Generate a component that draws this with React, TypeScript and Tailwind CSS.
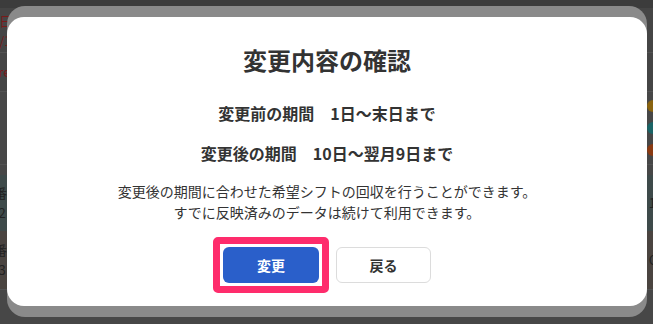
import React from 'react';

const font = { fontFamily: '"Noto Sans CJK JP", "Noto Sans", sans-serif' };

// 背景の画面（モーダルの下に見えている部分）
const Background: React.FC = () => (
    <div className="flex flex-col h-[324px] w-full bg-[#474747] text-[13px]" style={font}>
        <div className="h-[8px] bg-[#3c3c3c]" />
        <div className="h-[45px] flex justify-between border-b border-[#525252] bg-[#454545] pl-[0px]">
            <div className="flex flex-col text-[#7a1a1a] leading-[20px] pt-[3px] -ml-[8px]">
                <span>1日</span>
                <span>9/1</span>
            </div>
        </div>
        <div className="h-[39px] flex items-center border-b border-[#525252] bg-[#454545]">
            <span className="text-[#7a1a1a] -ml-[10px]">Pre</span>
        </div>
        <div className="h-[73px] flex flex-col items-end justify-center gap-[10px] border-b border-[#525252] pr-[0px]">
            <span className="w-[12px] h-[12px] rounded-full bg-[#8a6410] -mr-[6px]" />
            <span className="w-[12px] h-[12px] rounded-full bg-[#1b6466] -mr-[6px]" />
            <span className="w-[12px] h-[12px] rounded-full bg-[#8a3a12] -mr-[6px]" />
        </div>
        <div className="h-[10px]" />
        <div className="h-[56px] flex items-center justify-between bg-[#3e4a4a] text-[#222]">
            <div className="flex flex-col leading-[20px] -ml-[6px]">
                <span>番</span>
                <span>-2</span>
            </div>
            <span className="-mr-[3px]">1</span>
        </div>
        <div className="h-[58px] flex items-center justify-between bg-[#4a4440] text-[#222]">
            <div className="flex flex-col leading-[20px] -ml-[6px]">
                <span>番</span>
                <span>-3</span>
            </div>
            <span className="-mr-[4px]">C</span>
        </div>
        <div className="flex-1 border-t border-[#525252]" />
    </div>
);

const ConfirmDialog: React.FC = () => (
    <div className="absolute left-[7px] top-[6px] w-[640px] h-[311px] rounded-[18px] bg-[#8a8a8a] py-[11px]">
        <div className="h-full rounded-[17px] bg-white flex flex-col items-center pt-[27px] text-[#333]" style={font}>
            {/* タイトル */}
            <h2 className="text-[24px] leading-[32px] font-bold">変更内容の確認</h2>

            {/* 期間 */}
            <p className="mt-[25px] text-[16px] leading-[24px] font-bold">変更前の期間　1日〜末日まで</p>
            <p className="mt-[16px] text-[16px] leading-[24px] font-bold">変更後の期間　10日〜翌月9日まで</p>

            {/* 説明 */}
            <div className="mt-[16px] text-[14px] leading-[21px] text-center">
                <p>変更後の期間に合わせた希望シフトの回収を行うことができます。</p>
                <p>すでに反映済みのデータは続けて利用できます。</p>
            </div>

            {/* ボタン */}
            <div className="mt-[24px] flex gap-[17px]">
                <div className="relative">
                    <button className="w-[96px] h-[36px] rounded-[6px] bg-[#2a5fca] text-white text-[14px] font-bold">
                        変更
                    </button>
                    <div className="absolute -inset-[10px] rounded-[5px] border-[7px] border-[#fe2c6c] pointer-events-none" />
                </div>
                <button className="w-[95px] h-[36px] rounded-[6px] bg-white border border-[#dcdcdc] text-[#333] text-[14px] font-bold">
                    戻る
                </button>
            </div>
        </div>
    </div>
);

export default function App() {
    return (
        <div className="relative w-[653px] h-[324px] overflow-hidden">
            <Background />
            <ConfirmDialog />
        </div>
    );
}
